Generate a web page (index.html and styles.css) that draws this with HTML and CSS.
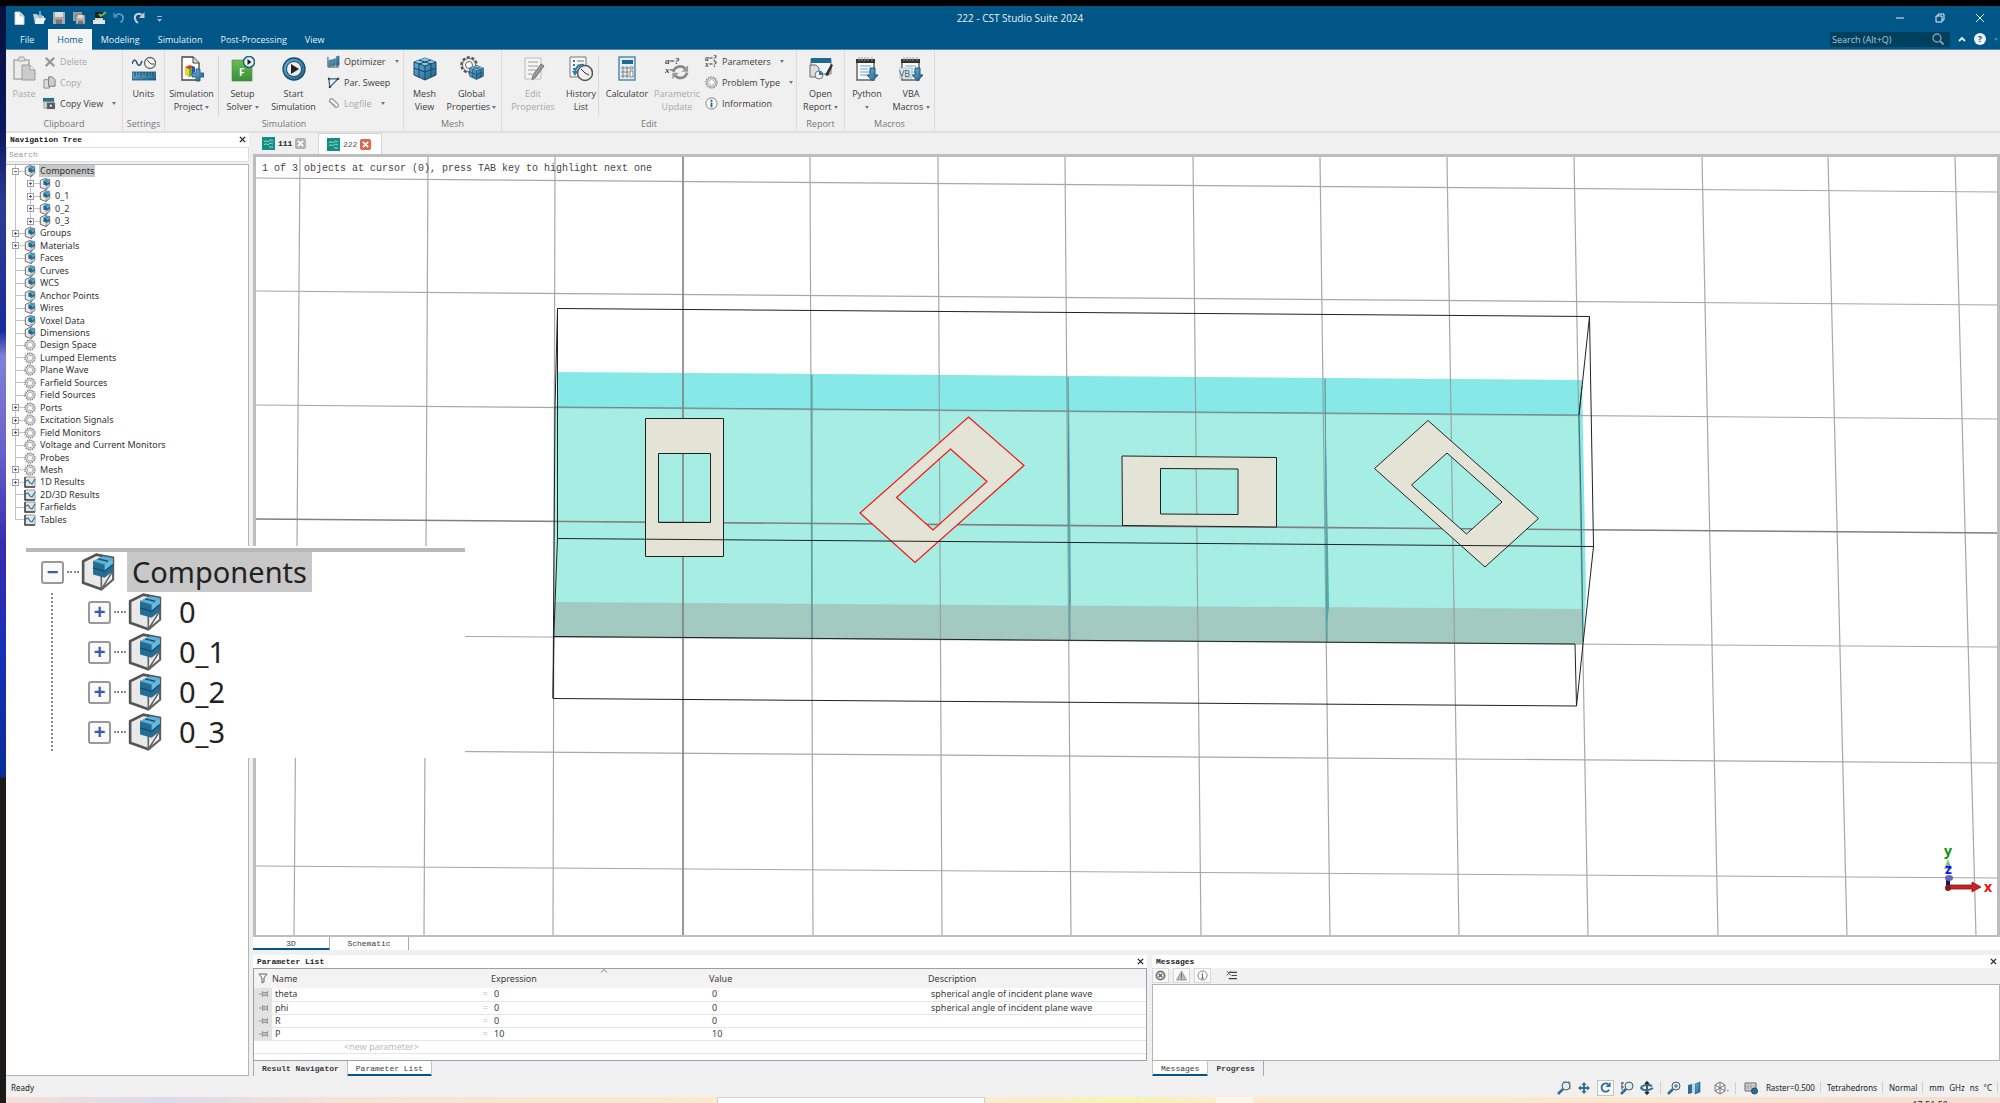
FILE: index.html
```html
<!DOCTYPE html>
<html lang="en">
<head>
    <meta charset="UTF-8">
    <meta name="viewport" content="width=device-width, initial-scale=1.0">
    <title>222 - CST Studio Suite 2024</title>
    <link rel="stylesheet" href="styles.css">
</head>
<body>
    <!-- Shared icons -->
    <svg class="defs" width="0" height="0" aria-hidden="true">
        <linearGradient id="blue" x1="0" y1="0" x2="1" y2="1">
            <stop offset="0" stop-color="#6db6dc"/><stop offset="1" stop-color="#1d5f88"/>
        </linearGradient>
        <linearGradient id="green" x1="0" y1="0" x2="0" y2="1">
            <stop offset="0" stop-color="#6cba55"/><stop offset="1" stop-color="#38903a"/>
        </linearGradient>
        <symbol id="cube" viewBox="0 0 20 23">
            <path d="M1 5 9 1l10 2v13l-7 6L1 18z" fill="#e9e9e9" stroke="#555" stroke-width="1.6"/>
            <path d="M12 13v9M12 22l7-6v-5z" fill="#fff" stroke="#666"/>
            <path d="M7 5l6-3 6 1v8l-5 4-7-2z" fill="#256d93"/>
            <path d="M7 5l6-3 6 1-5 4z" fill="#5db0d8"/>
            <path d="M14 7l5-4v4l-5 4z" fill="#69b9dd"/>
            <path d="M7 9l7 2 5-4M10 3.500l6 1.500" fill="none" stroke="#154f70" stroke-width=".8"/>
        </symbol>
        <symbol id="gear" viewBox="0 0 12 12">
            <circle cx="6" cy="6" r="5.200" fill="none" stroke="#8a8a8a" stroke-width="1.200" stroke-dasharray="1.200 1.100"/>
            <circle cx="6" cy="6" r="4.300" fill="#f4f4f4" stroke="#8a8a8a" stroke-width=".9"/>
            <circle cx="6" cy="6" r="2.700" fill="#fff" stroke="#999" stroke-width=".7"/>
        </symbol>
        <symbol id="chart" viewBox="0 0 12 12">
            <path d="M1 1v10h10V1z" fill="#e4e4e4" stroke="#999"/>
            <path d="M1 1v10h10" fill="none" stroke="#444" stroke-width="1.500"/>
            <path d="M2 5l2-1 2 3 2 1 3-5" fill="none" stroke="#2c7ca6" stroke-width="1.300"/>
        </symbol>
        <symbol id="pin" viewBox="0 0 9 6">
            <path d="M0 3h3M3.500 0v6M8.500 0v6M4 1.500h4M4 3h4M4 4.500h4" stroke="#888" stroke-width=".8" fill="none"/>
        </symbol>
        <symbol id="wave" viewBox="0 0 13 13">
            <path d="M0 0h13v13H0z" fill="#0f8f86"/>
            <path d="M2 5c2-3 3 1 5-1s3 0 4 0M2 8c2-3 3 1 5-1s3 0 4 0M7 10c2-1 2 1 4 0" fill="none" stroke="#d5f3ef" stroke-width=".8"/>
        </symbol>
        <symbol id="grid-cube" viewBox="0 0 24 24">
            <path d="M1 5 12 1l11 4v13l-11 5L1 18z" fill="url(#blue)" stroke="#16486a"/>
            <path d="M1 5l11 4 11-4L12 1z" fill="#8cc8e6"/>
            <path d="M1 5l11 4 11-4M12 9v14M1 11l11 4 11-4M6 7v13M18 7v13M6 3l12 4M18 3L6 7" fill="none" stroke="#16486a"/>
        </symbol>
        <symbol id="notepad" viewBox="0 0 24 26">
            <path d="M2 4h17v20H2z" fill="#fafafa" stroke="#666" stroke-width="1.500"/>
            <path d="M1 3h19v4H1z" fill="#333"/>
            <path d="M4 1v4M7 1v4M10 1v4M13 1v4M17 1v4" stroke="#999"/>
            <path d="M5 10h11M5 13h8M5 16h10M5 19h7" stroke="#93c5df" stroke-width="1.500"/>
            <path d="M15 12h5v7h3l-5.500 6-5.500-6h3z" fill="url(#blue)" stroke="#1c5376"/>
        </symbol>
        <symbol id="lens" viewBox="0 0 14 14">
            <path d="M1 13l5-5" stroke="#2d6f96" stroke-width="2.500"/>
            <circle cx="9" cy="5" r="4" fill="#d9edf7" stroke="#555"/>
        </symbol>
        <symbol id="turn" viewBox="0 0 12 12">
            <path d="M10 8.500A4.500 4.500 0 1 1 9 2.500" fill="none" stroke="currentColor" stroke-width="2"/>
            <path d="M11.500 0v5.500H6z" fill="currentColor"/>
        </symbol>
    </svg>

    <div class="desktop">
        <div class="wallpaper"></div>
        <div class="window">
            <header class="titlebar">
                <div class="quick-access">
                    <button class="qa" aria-label="New"><svg viewBox="0 0 14 14"><path d="M3 1h5l4 4v8.500H3z" fill="#fff" stroke="#ccc"/><path d="M8 1v4h4" fill="#ddd" stroke="#999" stroke-width=".6"/></svg></button>
                    <button class="qa" aria-label="Open"><svg viewBox="0 0 14 14"><path d="M1 3h4l1 2h6v8H3z" fill="#c9c9c9"/><path d="M4 7h10l-3 6H3z" fill="#f2f2f2"/><path d="M8 0v6M6 4l2 3 2-3" stroke="#7cc4e8" stroke-width="1.500" fill="none"/></svg></button>
                    <button class="qa" aria-label="Save"><svg viewBox="0 0 14 14"><path d="M1 1h12v12H1z" fill="#a9a9a9"/><path d="M3 1h8v5H3z" fill="#ddd"/><path d="M4 8.500h6V13H4z" fill="#777"/></svg></button>
                    <button class="qa" aria-label="Save all"><svg viewBox="0 0 14 14"><path d="M1 1h9v9H1z" fill="#999"/><path d="M4 4h9v9H4z" fill="#b5b5b5" stroke="#666" stroke-width=".6"/><path d="M6 4h5v3H6z" fill="#ddd"/><path d="M6 9.500h5V13H6z" fill="#777"/></svg></button>
                    <button class="qa" aria-label="Archive"><svg viewBox="0 0 14 14"><path d="M3 1h8v6H3z" fill="#222"/><path d="M1 9h12v4H1z" fill="#e4e4e4"/><path d="M3 8h8" stroke="#fff" stroke-width="1.500"/><path d="M7 3l2 2 5-4" stroke="#65c046" stroke-width="2" fill="none"/></svg></button>
                    <button class="qa undo" aria-label="Undo"><svg viewBox="0 0 14 14"><path d="M3 5c4-4 9-1 8 3-.5 2-1.500 3-2.500 3.500" fill="none" stroke="currentColor" stroke-width="1.500"/><path d="M2 2v4h4" fill="none" stroke="currentColor" stroke-width="1.200"/></svg></button>
                    <button class="qa redo" aria-label="Redo"><svg viewBox="0 0 14 14"><path d="M10 4C6 1 2 4 3 8c.5 2 1.500 3 3 4" fill="none" stroke="currentColor" stroke-width="2"/><path d="M12.500 1v6H7z" fill="currentColor"/></svg></button>
                    <button class="qa more" aria-label="Customize"><svg viewBox="0 0 14 14"><path d="M5 5.500h5" stroke="currentColor"/><path d="M5 8h5l-2.500 3z" fill="currentColor"/></svg></button>
                </div>
                <div class="window-title">222 - CST Studio Suite 2024</div>
                <div class="window-buttons">
                    <button aria-label="Minimize"><svg viewBox="0 0 10 10"><path d="M1 5h8" stroke="#e8f1f7"/></svg></button>
                    <button aria-label="Restore"><svg viewBox="0 0 10 10"><path d="M1 3h6v6H1zM3 3V1h6v6H7" fill="none" stroke="#e8f1f7"/></svg></button>
                    <button aria-label="Close"><svg viewBox="0 0 10 10"><path d="M1 1l8 8M9 1L1 9" stroke="#e8f1f7"/></svg></button>
                </div>
            </header>

            <nav class="menubar">
                <a href="#" class="menu-tab file">File</a>
                <a href="#" class="menu-tab active">Home</a>
                <a href="#" class="menu-tab">Modeling</a>
                <a href="#" class="menu-tab">Simulation</a>
                <a href="#" class="menu-tab">Post-Processing</a>
                <a href="#" class="menu-tab">View</a>
                <div class="menu-right">
                    <label class="quick-search">
                        <input type="text" placeholder="Search (Alt+Q)" aria-label="Search">
                        <svg viewBox="0 0 12 12"><circle cx="5" cy="5" r="4" fill="none" stroke="#8d9ba5" stroke-width="1.300"/><path d="M8 8l3.500 3.500" stroke="#8d9ba5" stroke-width="2"/></svg>
                    </label>
                    <button class="collapse" aria-label="Collapse ribbon"><svg viewBox="0 0 8 6"><path d="M1 5l3-3 3 3" fill="none" stroke="#e6eef3" stroke-width="1.800"/></svg></button>
                    <button class="help" aria-label="Help">?</button>
                    <i class="arrow dim"></i>
                </div>
            </nav>

            <section class="ribbon">
                <div class="group g-clipboard">
                    <div class="group-body">
                        <button class="big w-paste" disabled>
                            <svg viewBox="0 0 24 26"><path d="M2 4h15v19H2z" fill="#ececec" stroke="#aaa" stroke-width="1.500"/><path d="M6 5l1-4h5l1 4z" fill="#ddd" stroke="#aaa"/><path d="M10 9h8l5 5v10H10z" fill="#ccc" stroke="#999"/><path d="M18 9v5h5" fill="#eee" stroke="#999"/></svg>
                            <span>Paste</span>
                        </button>
                        <div class="stack">
                            <button class="small" disabled><svg viewBox="0 0 14 14"><path d="M3 3l9 9M12 3l-9 9" stroke="#999" stroke-width="2.500"/></svg>Delete</button>
                            <button class="small" disabled><svg viewBox="0 0 14 14"><path d="M1 4h6v9H1z" fill="#ddd" stroke="#888"/><path d="M6 1h4l3 3v7H6z" fill="#ccc" stroke="#777"/></svg>Copy</button>
                            <button class="small"><svg viewBox="0 0 14 14"><path d="M0 1h12v4H0z" fill="#2a6f96"/><path d="M1 5h10v7H1z" fill="#ddd" stroke="#666" stroke-width=".6"/><path d="M4 6h9v7H4z" fill="#666"/><circle cx="8.500" cy="9.500" r="2.200" fill="#ccc" stroke="#333"/></svg>Copy View<i class="arrow"></i></button>
                        </div>
                    </div>
                    <div class="group-name">Clipboard</div>
                </div>
                <div class="group g-settings">
                    <div class="group-body">
                        <button class="big w-units">
                            <svg viewBox="0 0 24 26"><path d="M0 8c2-6 4-4 5-1s3 4 5-2" fill="none" stroke="#1d4f70" stroke-width="1.500"/><circle cx="18" cy="7" r="5.500" fill="#f4f4f4" stroke="#666" stroke-width="1.300"/><path d="M15 4l4 4h3" fill="none" stroke="#444"/><path d="M0 16h24v8H0z" fill="url(#blue)" stroke="#1c5376" stroke-width=".8"/><path d="M3 16v4M6 16v3M9 16v4M12 16v3M15 16v4M18 16v3M21 16v4" stroke="#123c55"/></svg>
                            <span>Units</span>
                        </button>
                    </div>
                    <div class="group-name">Settings</div>
                </div>
                <div class="group g-simulation">
                    <div class="group-body">
                        <button class="big w-project">
                            <svg viewBox="0 0 24 26"><path d="M2 1h11l6 6v17H2z" fill="#fff" stroke="#444" stroke-width="1.300"/><path d="M13 1v6h6" fill="#ddd" stroke="#444"/><path d="M5 11l5-2 4 2v7l-5 3-4-3z" fill="#e33a22"/><path d="M5 11l4 2v8l-4-3z" fill="#f4d421"/><path d="M9 13l3-1v7l-3 2z" fill="#54b848"/><path d="M12 10l3 1v5l-3 1z" fill="#2c4fc4"/><path d="M16 13h4v4h4v4h-4v4h-4v-4h-4v-4h4z" fill="url(#blue)" stroke="#1c5376" stroke-width=".8"/></svg>
                            <span>Simulation<br>Project <i class="arrow"></i></span>
                        </button>
                        <div class="divider"></div>
                        <button class="big w-setup">
                            <svg viewBox="0 0 24 26"><path d="M1 4h20v21H1z" fill="url(#green)" stroke="#3f8f3d" stroke-width=".6"/><text x="8" y="20" class="solver-letter">F</text><circle cx="18" cy="6" r="5.500" fill="#e9f2f7" stroke="#25627f" stroke-width="1.500"/><path d="M16.500 3v6l4-3z" fill="#222"/></svg>
                            <span>Setup<br>Solver <i class="arrow"></i></span>
                        </button>
                        <button class="big w-start">
                            <svg viewBox="0 0 24 26"><circle cx="12" cy="13" r="11" fill="url(#blue)" stroke="#17496a" stroke-width="1.300"/><circle cx="12" cy="13" r="7.500" fill="#eee" stroke="#17496a"/><path d="M9 8v10l8-5z" fill="#222"/></svg>
                            <span>Start<br>Simulation</span>
                        </button>
                        <div class="stack">
                            <button class="small"><svg viewBox="0 0 14 14"><path d="M1 2v11h12" fill="none" stroke="#444"/><path d="M2 6l3-1v7H2zM6 5l3-1v7l-3 1zM10 2l3-1v10l-3 1z" fill="url(#blue)" stroke="#1c5376" stroke-width=".6"/></svg>Optimizer<i class="arrow"></i></button>
                            <button class="small"><svg viewBox="0 0 14 14"><path d="M2 3h10L3 12z" fill="none" stroke="#2c6485" stroke-width="1.300"/><path d="M1 2h2v2H1zM11 2h2v2h-2zM2 11h2v2H2z" fill="#333"/></svg>Par. Sweep</button>
                            <button class="small" disabled><svg viewBox="0 0 14 14"><path d="M2 4l7 7c2 1 4-1 3-3L6 2C4 1 2 3 3 5l6 5" fill="none" stroke="#999" stroke-width="1.300"/></svg>Logfile<i class="arrow"></i></button>
                        </div>
                    </div>
                    <div class="group-name">Simulation</div>
                </div>
                <div class="group g-mesh">
                    <div class="group-body">
                        <button class="big w-mesh">
                            <svg viewBox="0 0 24 26"><use href="#grid-cube" width="24" height="26"/></svg>
                            <span>Mesh<br>View</span>
                        </button>
                        <button class="big w-global">
                            <svg viewBox="0 0 24 26"><circle cx="9" cy="9" r="7.500" fill="none" stroke="#555" stroke-width="2.500" stroke-dasharray="3 1.700"/><circle cx="9" cy="9" r="6.500" fill="#f4f4f4" stroke="#666"/><circle cx="9" cy="9" r="3.500" fill="#fff" stroke="#666"/><use href="#grid-cube" x="9" y="8" width="15" height="17"/></svg>
                            <span>Global<br>Properties <i class="arrow"></i></span>
                        </button>
                    </div>
                    <div class="group-name">Mesh</div>
                </div>
                <div class="group g-edit">
                    <div class="group-body">
                        <button class="big w-props" disabled>
                            <svg viewBox="0 0 24 26"><path d="M4 2h16v21H4z" fill="#f4f4f4" stroke="#bbb"/><path d="M7 6h10M7 10h10M7 14h8M7 18h4" stroke="#bbb" stroke-width="1.500"/><path d="M11 24l1-5 8-11 3 2-8 11z" fill="#999" stroke="#777"/></svg>
                            <span>Edit<br>Properties</span>
                        </button>
                        <button class="big w-history">
                            <svg viewBox="0 0 24 26"><path d="M1 1h16v20H1z" fill="#f6f6f6" stroke="#777"/><path d="M4 5h2M4 9h2M4 13h2" stroke="#2c7ca6" stroke-width="2"/><path d="M8 5h7M8 9h4" stroke="#777"/><circle cx="16" cy="17" r="7.500" fill="#eee" stroke="#555" stroke-width="1.500"/><path d="M12 13l4 4 4 2" fill="none" stroke="#333"/><path d="M6 17c0-6 5-9 9-8" fill="none" stroke="#2c7ca6" stroke-width="2"/><path d="M3 15h6l-3 5z" fill="#2c7ca6"/></svg>
                            <span>History<br>List</span>
                        </button>
                        <div class="divider"></div>
                        <button class="big w-calc">
                            <svg viewBox="0 0 24 26"><path d="M4 1h16v23H4z" fill="#e7eef2" stroke="#4d8cac" stroke-width="1.500"/><path d="M7 4h11v4H7z" fill="#1f6a94"/><path d="M7 11h2v2H7zM11 11h2v2h-2zM15 11h3v2h-3zM7 15h2v2H7zM11 15h2v2h-2zM7 19h2v2H7zM11 19h2v2h-2zM15 15h3v6h-3z" fill="#fff" stroke="#666" stroke-width=".8"/></svg>
                            <span>Calculator</span>
                        </button>
                        <button class="big w-update" disabled>
                            <svg viewBox="0 0 26 26"><text x="0" y="8" class="glyph">a=?</text><text x="0" y="17" class="glyph">x=</text><path d="M9 16c2-7 10-7 13-3M24 17c-2 7-10 7-13 3" fill="none" stroke="#888" stroke-width="3"/><path d="M25 9v7h-7zM8 24v-7h7z" fill="#999"/></svg>
                            <span>Parametric<br>Update</span>
                        </button>
                        <div class="stack">
                            <button class="small"><svg viewBox="0 0 14 14"><text x="0" y="6" class="glyph small-glyph">a=?</text><text x="0" y="13" class="glyph small-glyph">x=?</text></svg>Parameters<i class="arrow"></i></button>
                            <button class="small"><svg viewBox="0 0 12 12"><use href="#gear"/></svg>Problem Type<i class="arrow"></i></button>
                            <button class="small"><svg viewBox="0 0 14 14"><circle cx="7" cy="7" r="6" fill="#fff" stroke="#777"/><path d="M7 3v2M7 6v5" stroke="#1f6a94" stroke-width="2"/></svg>Information</button>
                        </div>
                    </div>
                    <div class="group-name">Edit</div>
                </div>
                <div class="group g-report">
                    <div class="group-body">
                        <button class="big w-report">
                            <svg viewBox="0 0 24 26"><path d="M2 3h20v15H2z" fill="#f4f4f4" stroke="#777"/><path d="M2 2h20v5H2z" fill="#1f6a94"/><path d="M1 9h6l3 3v9H1z" fill="#ddd" stroke="#666"/><circle cx="10" cy="19" r="4" fill="#eee" stroke="#777"/><path d="M10 15a4 4 0 0 1 4 4h-4z" fill="#2c7ca6"/><path d="M16 19l6-11 2 1-5 11z" fill="#333"/></svg>
                            <span>Open<br>Report <i class="arrow"></i></span>
                        </button>
                    </div>
                    <div class="group-name">Report</div>
                </div>
                <div class="group g-macros">
                    <div class="group-body">
                        <button class="big w-macro">
                            <svg viewBox="0 0 24 26"><use href="#notepad"/></svg>
                            <span>Python<br><i class="arrow"></i></span>
                        </button>
                        <button class="big w-macro">
                            <svg viewBox="0 0 24 26"><use href="#notepad" x="1"/><path d="M0 12h13v10H0z" fill="#dfe6ea" stroke="#aaa" stroke-width=".6"/><text x="0" y="21" class="vb">VB</text></svg>
                            <span>VBA<br>Macros <i class="arrow"></i></span>
                        </button>
                    </div>
                    <div class="group-name">Macros</div>
                </div>
            </section>

            <div class="main">
                <aside class="nav-panel">
                    <div class="panel-title">Navigation Tree<button class="close" aria-label="Close navigation tree"><svg viewBox="0 0 8 8"><path d="M1 1l6 6M7 1L1 7" stroke="#222" stroke-width="1.500"/></svg></button></div>
                    <input class="tree-search" type="text" placeholder="Search" aria-label="Search tree">
                    <div class="tree-box">
                        <ul class="tree">
                            <li><button class="exp open" aria-label="Collapse"></button><svg><use href="#cube"/></svg><span class="selected">Components</span></li>
                            <li class="child"><button class="exp" aria-label="Expand"></button><svg><use href="#cube"/></svg><span>0</span></li>
                            <li class="child"><button class="exp" aria-label="Expand"></button><svg><use href="#cube"/></svg><span>0_1</span></li>
                            <li class="child"><button class="exp" aria-label="Expand"></button><svg><use href="#cube"/></svg><span>0_2</span></li>
                            <li class="child"><button class="exp" aria-label="Expand"></button><svg><use href="#cube"/></svg><span>0_3</span></li>
                            <li><button class="exp" aria-label="Expand"></button><svg><use href="#cube"/></svg><span>Groups</span></li>
                            <li><button class="exp" aria-label="Expand"></button><svg><use href="#cube"/></svg><span>Materials</span></li>
                            <li><i></i><svg><use href="#cube"/></svg><span>Faces</span></li>
                            <li><i></i><svg><use href="#cube"/></svg><span>Curves</span></li>
                            <li><i></i><svg><use href="#cube"/></svg><span>WCS</span></li>
                            <li><i></i><svg><use href="#cube"/></svg><span>Anchor Points</span></li>
                            <li><i></i><svg><use href="#cube"/></svg><span>Wires</span></li>
                            <li><i></i><svg><use href="#cube"/></svg><span>Voxel Data</span></li>
                            <li><i></i><svg><use href="#cube"/></svg><span>Dimensions</span></li>
                            <li><i></i><svg><use href="#gear"/></svg><span>Design Space</span></li>
                            <li><i></i><svg><use href="#gear"/></svg><span>Lumped Elements</span></li>
                            <li><i></i><svg><use href="#gear"/></svg><span>Plane Wave</span></li>
                            <li><i></i><svg><use href="#gear"/></svg><span>Farfield Sources</span></li>
                            <li><i></i><svg><use href="#gear"/></svg><span>Field Sources</span></li>
                            <li><button class="exp" aria-label="Expand"></button><svg><use href="#gear"/></svg><span>Ports</span></li>
                            <li><button class="exp" aria-label="Expand"></button><svg><use href="#gear"/></svg><span>Excitation Signals</span></li>
                            <li><button class="exp" aria-label="Expand"></button><svg><use href="#gear"/></svg><span>Field Monitors</span></li>
                            <li><i></i><svg><use href="#gear"/></svg><span>Voltage and Current Monitors</span></li>
                            <li><i></i><svg><use href="#gear"/></svg><span>Probes</span></li>
                            <li><button class="exp" aria-label="Expand"></button><svg><use href="#gear"/></svg><span>Mesh</span></li>
                            <li><button class="exp" aria-label="Expand"></button><svg><use href="#chart"/></svg><span>1D Results</span></li>
                            <li><i></i><svg><use href="#chart"/></svg><span>2D/3D Results</span></li>
                            <li><i></i><svg><use href="#chart"/></svg><span>Farfields</span></li>
                            <li><i></i><svg><use href="#chart"/></svg><span>Tables</span></li>
                        </ul>
                    </div>
                </aside>

                <div class="workspace">
                    <div class="doc-tabs">
                        <div class="doc-tab"><svg class="doc-icon"><use href="#wave"/></svg><a href="#">111</a><button class="tab-close" aria-label="Close 111"><svg viewBox="0 0 8 8"><path d="M1 1l6 6M7 1L1 7" stroke="#fff" stroke-width="2"/></svg></button></div>
                        <div class="doc-tab active"><svg class="doc-icon"><use href="#wave"/></svg><a href="#">222</a><button class="tab-close" aria-label="Close 222"><svg viewBox="0 0 8 8"><path d="M1 1l6 6M7 1L1 7" stroke="#fff" stroke-width="2"/></svg></button></div>
                    </div>

                    <div class="viewport">
                        <div class="hint">1 of 3 objects at cursor (0), press TAB key to highlight next one</div>
                        <svg class="scene" viewBox="256 156 1741 779" preserveAspectRatio="xMinYMin slice">
                            <!-- substrate -->
                            <path d="M557 371L1582 379L1586 590L1583 643L554 636z" fill="#87e9e7"/>
                            <path d="M555 406L1579 414L1583 610L555 603z" fill="#a6eee4"/>
                            <path d="M555 601L1583 608L1583 643L554 636z" fill="#a3cac0"/>

                            <!-- working plane grid -->
                            <g stroke="#999" stroke-width="1.200" opacity=".85">
                                <path d="M300 156L294 935M428 156L424 935M555 156L553 935M810 156L813 935M938 156L942 935M1065 156L1071 935M1193 156L1201 935M1320 156L1330 935M1447 156L1459 935M1574 156L1588 935M1702 156L1718 935M1828 156L1847 935M1955 156L1976 935"/>
                                <path d="M256 177L1997 191M256 290L1997 304M256 404L1997 418M256 634L1997 646M256 749L1997 762M256 865L1997 877"/>
                            </g>
                            <path d="M683 156V935M256 518L1997 532" stroke="#808080" stroke-width="1.600"/>

                            <!-- cell seams -->
                            <g fill="none" stroke="#3f8f8f">
                                <path d="M812 374L812 637M1068 376L1069 540L1070 640M1325 378L1327 641"/>
                                <path d="M555 406L1579 414" stroke="#668c8c"/>
                            </g>
                            <path d="M1069 390L1071 600L1069 630zM1325 380L1329 605L1326 635z" fill="#4fa9a9"/>
                            <path d="M1582 385L1579 414L1581 500L1583 640" fill="none" stroke="#2e7474"/>

                            <!-- patches with slots -->
                            <g fill="#e3e4d6" fill-rule="evenodd" stroke="#222">
                                <path d="M645.500 417.500h78v138h-78zM658.500 452.500h52v69h-52z"/>
                                <path stroke="#ff1010" stroke-width="1.200" d="M968.500 416L1024 464.500L915 561.500L860 512zM950.500 448L987 480.500L933 529L896.500 496.500z"/>
                                <path d="M1122 455L1276.500 456.500V526L1122.500 524.500zM1160.500 467.500L1238 468V513.500L1160.500 513z"/>
                                <path d="M1428 419.500L1538.500 517.500L1485 566L1374.500 467.500zM1447 452L1502 501L1466.500 533L1411.500 484z"/>
                            </g>

                            <!-- bounding box -->
                            <g fill="none" stroke="#222">
                                <path d="M557.500 307.500L1589.500 315.500L1593.500 545.500L1583 643L1576.500 705L553 697.500L554 630L557.500 537.500z"/>
                                <path d="M557.500 537.500L1593.500 545.500M1589.500 315.500L1579 414M1575 643L1576.500 705"/>
                                <path d="M557.500 307.500L555 406L553 697"/>
                                <path d="M554 635.500L1575 643"/>
                            </g>

                            <!-- axes -->
                            <path d="M1944 868l4-10 4 10z" fill="#7cc47c"/>
                            <path d="M1946 888V878h4v10z" fill="#151560"/>
                            <ellipse cx="1949" cy="877" rx="4" ry="3" fill="#6666bb"/>
                            <path d="M1947 884h25v-3l9 5-9 5v-3h-25z" fill="#cc2222" stroke="#801515" stroke-width=".8"/>
                            <circle cx="1948" cy="887" r="3" fill="#8a1a1a"/>
                            <text class="axis" x="1944" y="855" fill="#0a980a">y</text>
                            <text class="axis" x="1945" y="873" fill="#1010f0">z</text>
                            <text class="axis" x="1984" y="891" fill="#f01010">x</text>
                        </svg>
                    </div>

                    <div class="view-tabs">
                        <a href="#" class="active">3D</a>
                        <a href="#" class="schematic">Schematic</a>
                    </div>

                    <div class="docks">
                        <section class="dock">
                            <div class="panel-title">Parameter List<button class="close" aria-label="Close parameter list"><svg viewBox="0 0 8 8"><path d="M1 1l6 6M7 1L1 7" stroke="#222" stroke-width="1.500"/></svg></button></div>
                            <div class="param-box">
                                <table>
                                    <colgroup><col class="c-pin"><col class="c-name"><col class="c-expr"><col class="c-value"><col></colgroup>
                                    <thead>
                                        <tr>
                                            <th><svg class="funnel" viewBox="0 0 10 11"><path d="M1 1h8L6 5v4l-2 1V5z" fill="none" stroke="#666"/></svg></th>
                                            <th>Name</th>
                                            <th>Expression<svg class="sort" viewBox="0 0 8 4"><path d="M1 3.500l3-3 3 3" fill="none" stroke="#777"/></svg></th>
                                            <th>Value</th>
                                            <th>Description</th>
                                        </tr>
                                    </thead>
                                    <tbody>
                                        <tr><td><svg class="pin"><use href="#pin"/></svg></td><td>theta<i>=</i></td><td>0</td><td>0</td><td>spherical angle of incident plane wave</td></tr>
                                        <tr><td><svg class="pin"><use href="#pin"/></svg></td><td>phi<i>=</i></td><td>0</td><td>0</td><td>spherical angle of incident plane wave</td></tr>
                                        <tr><td><svg class="pin"><use href="#pin"/></svg></td><td>R<i>=</i></td><td>0</td><td>0</td><td></td></tr>
                                        <tr><td><svg class="pin"><use href="#pin"/></svg></td><td>P<i>=</i></td><td>10</td><td>10</td><td></td></tr>
                                        <tr class="new-row"><td></td><td><input type="text" placeholder="&lt;new parameter&gt;" aria-label="New parameter"></td><td></td><td></td><td></td></tr>
                                    </tbody>
                                </table>
                            </div>
                            <div class="dock-tabs">
                                <a href="#" class="first">Result Navigator</a>
                                <a href="#" class="active">Parameter List</a>
                            </div>
                        </section>

                        <section class="dock">
                            <div class="panel-title">Messages<button class="close" aria-label="Close messages"><svg viewBox="0 0 8 8"><path d="M1 1l6 6M7 1L1 7" stroke="#222" stroke-width="1.500"/></svg></button></div>
                            <div class="msg-tools">
                                <button aria-label="Errors"><svg viewBox="0 0 12 12"><circle cx="6" cy="6" r="5.500" fill="#777"/><circle cx="6" cy="6" r="3.500" fill="#eee"/><path d="M4 4l4 4M8 4L4 8" stroke="#666" stroke-width="1.500"/></svg></button>
                                <button aria-label="Warnings"><svg viewBox="0 0 12 12"><path d="M6 1l5.500 10H.5z" fill="#bbb" stroke="#999"/><path d="M6 4v4M6 9v1" stroke="#555"/></svg></button>
                                <button aria-label="Infos"><svg viewBox="0 0 12 12"><circle cx="6" cy="6" r="5" fill="#fff" stroke="#777"/><path d="M6 3v1M5 5h1v4M4.500 9h3" stroke="#555" fill="none"/></svg></button>
                                <button class="flat" aria-label="Clear"><svg viewBox="0 0 12 12"><path d="M4 2.500h8M6 6h6M3 9.500h9" stroke="#444" stroke-width="1.300"/><path d="M1 1l4 5M5 1L1 6" stroke="#555"/></svg></button>
                            </div>
                            <div class="msg-box"></div>
                            <div class="dock-tabs">
                                <a href="#" class="active">Messages</a>
                                <a href="#" class="last">Progress</a>
                            </div>
                        </section>
                    </div>
                </div>
            </div>

            <footer class="statusbar">
                <span class="ready">Ready</span>
                <button aria-label="Zoom window"><svg viewBox="0 0 14 14"><path d="M6 1h7v8" fill="none" stroke="#555" stroke-dasharray="1.500 1"/><use href="#lens" width="14" height="14"/></svg></button>
                <button aria-label="Pan"><svg viewBox="0 0 14 14"><path d="M7 1l2.500 3H8v2h2V4.500L13 7l-3 2.500V8H8v2h1.500L7 13l-2.500-3H6V8H4v1.500L1 7l3-2.500V6h2V4H4.500z" fill="#2a6e96"/></svg></button>
                <button class="pressed" aria-label="Rotate"><svg class="blue" viewBox="0 0 12 12"><use href="#turn"/></svg></button>
                <button aria-label="Dynamic zoom"><svg viewBox="0 0 14 14"><path d="M2 1v8M1 2h3M1 6h3" stroke="#555"/><use href="#lens" width="14" height="14"/></svg></button>
                <button aria-label="Rotate in plane"><svg viewBox="0 0 14 14"><path d="M7 1v12M5 3l2-2 2 2M5 11l2 2 2-2" stroke="#222" stroke-width="1.500" fill="none"/><path d="M12 5C8 3 2 4 1 7c2 3 8 3 12 0" fill="none" stroke="#2a6e96" stroke-width="2"/></svg></button>
                <i class="sep"></i>
                <button aria-label="Reset view"><svg viewBox="0 0 14 14"><use href="#lens" width="14" height="14"/><path d="M7 5h4M9 3v4" stroke="#2a6e96"/></svg></button>
                <button aria-label="Cutting plane"><svg viewBox="0 0 14 14"><path d="M1 4l4-1v9l-4 1z" fill="#2a6e96"/><path d="M8 3l5-2v10l-5 2z" fill="url(#blue)" stroke="#1c5376" stroke-width=".6"/><path d="M5 3l3-1v9l-3 1z" fill="#bcdbea"/></svg></button>
                <button class="wide" aria-label="Wireframe"><svg viewBox="0 0 14 14"><path d="M2 4l5-3 5 3v6l-5 3-5-3zM2 4l5 3 5-3M7 7v6M2 10l5-3 5 3M7 1v6" fill="none" stroke="#777"/></svg>.</button>
                <i class="sep"></i>
                <button class="raster" aria-label="Raster settings"><svg viewBox="0 0 14 14"><path d="M1 2h11v8H1z" fill="#ddd" stroke="#666"/><path d="M1 5h11M1 7h11M4 2v8M7 2v8" stroke="#888" stroke-width=".6"/><circle cx="10.500" cy="10" r="3" fill="#2a6e96" stroke="#174a68"/></svg></button>
                <span class="cell">Raster=0.500</span>
                <span class="cell">Tetrahedrons</span>
                <span class="cell">Normal</span>
                <span class="cell units"><b>mm</b><b>GHz</b><b>ns</b><b>°C</b></span>
            </footer>

            <div class="taskbar"><div class="task-search"></div><div class="task-app"></div><time>17:51:50</time></div>
        </div>
    </div>

    <!-- Enlarged part of the tree -->
    <div class="magnifier">
        <ul>
            <li class="root"><i class="box">−</i><i class="dots"></i><svg><use href="#cube"/></svg><span class="selected">Components</span></li>
            <li><i class="box">+</i><i class="dots"></i><svg><use href="#cube"/></svg><span>0</span></li>
            <li><i class="box">+</i><i class="dots"></i><svg><use href="#cube"/></svg><span>0_1</span></li>
            <li><i class="box">+</i><i class="dots"></i><svg><use href="#cube"/></svg><span>0_2</span></li>
            <li><i class="box">+</i><i class="dots"></i><svg><use href="#cube"/></svg><span>0_3</span></li>
        </ul>
    </div>
</body>
</html>
```
FILE: styles.css
```css
* {
    box-sizing: border-box;
}

body {
    margin: 0;
    background: #000;
    font-family: "Open Sans", "Noto Sans", sans-serif;
    font-size: 9px;
    color: #3c3c3c;
    overflow: hidden;
}

ul {
    list-style: none;
    margin: 0;
    padding: 0;
}

button, input {
    font: inherit;
    color: inherit;
    border: none;
    background: none;
    padding: 0;
    margin: 0;
}

a {
    color: inherit;
    text-decoration: none;
}

i, b {
    font-style: normal;
    font-weight: normal;
}

svg {
    display: block;
    flex: none;
}

.defs {
    position: absolute;
}

.desktop {
    display: flex;
    height: 100vh;
    padding-top: 6px;
}

.wallpaper {
    width: 6px;
    background: linear-gradient(#08103c 0, #0b1660 120px, #2c3c94 200px, #1a2c9c 325px, #8080d8 350px, #6a62cc 440px, #3a2ab0 540px, #1530b8 650px, #0a2c98 771px, #1d1b17 772px);
}

.window {
    flex: 1;
    min-width: 0;
    display: flex;
    flex-direction: column;
    background: #f0f0f0;
}

/* Title bar */
.titlebar {
    display: grid;
    grid-template-columns: 1fr auto 1fr;
    align-items: center;
    height: 23px;
    background: #005686;
    color: #e8f1f7;
}

.quick-access {
    display: flex;
    gap: 6px;
    padding-left: 6px;
}

.qa svg {
    width: 14px;
    height: 14px;
}

.undo { color: #5fa3c9; }
.redo { color: #c4ccd1; }
.more { color: #9cb4c3; }

.window-title {
    font-size: 10px;
    padding-left: 34px;
}

.window-buttons {
    display: flex;
    justify-content: flex-end;
    gap: 30px;
    padding-right: 15px;
}

.window-buttons svg {
    width: 10px;
    height: 10px;
}

.menubar {
    display: flex;
    height: 21px;
    background: #005686;
    border-bottom: 1px solid #4b8cae;
    color: #e8f1f7;
}

.menu-tab {
    padding: 0 9px;
    line-height: 21px;
}

.menu-tab.file {
    padding: 0 14px;
}

.menu-tab.active {
    background: #f4f4f4;
    color: #005686;
    height: 21px;
}

.menu-right {
    margin-left: auto;
    display: flex;
    align-items: center;
    gap: 8px;
    padding-right: 2px;
}

.quick-search {
    display: flex;
    align-items: center;
    width: 120px;
    height: 15px;
    background: #00405f;
    padding: 0 6px 0 2px;
}

.quick-search input {
    flex: 1;
    min-width: 0;
}

.quick-search input::placeholder {
    color: #b3c7d3;
}

.quick-search svg {
    width: 12px;
    height: 12px;
}

.collapse svg {
    width: 8px;
    height: 6px;
}

.help {
    width: 12px;
    height: 12px;
    border-radius: 50%;
    background: #eef2f4;
    color: #005686;
    font-weight: bold;
    line-height: 12px;
}

.arrow {
    display: inline-block;
    border: 2px solid transparent;
    border-top: 3px solid #777;
    border-bottom: none;
    vertical-align: middle;
}

.arrow.dim {
    border-top-color: #5d7d90;
}

/* Ribbon */
.ribbon {
    display: flex;
    height: 83px;
    border-bottom: 2px solid #e0e0e0;
}

.group {
    display: flex;
    flex-direction: column;
    flex: none;
    border-right: 1px solid #dcdcdc;
}

.g-clipboard { width: 117px; }
.g-settings { width: 42px; }
.g-simulation { width: 239px; }
.g-mesh { width: 98px; }
.g-edit { width: 295px; }
.g-report { width: 48px; }
.g-macros { width: 90px; }

.group-body {
    flex: 1;
    display: flex;
    padding-top: 6px;
}

.group-name {
    text-align: center;
    color: #777;
    line-height: 14px;
}

.big {
    display: flex;
    flex-direction: column;
    align-items: center;
    gap: 5px;
    line-height: 13px;
    white-space: nowrap;
}

.big svg {
    width: 24px;
    height: 26px;
}

.big:disabled, .small:disabled {
    color: #a8a8a8;
}

.w-paste { width: 36px; }
.w-units { width: 41px; }
.w-project { width: 53px; }
.w-setup { width: 47px; }
.w-start { width: 55px; }
.w-mesh { width: 41px; }
.w-global { width: 53px; }
.w-props { width: 62px; }
.w-history { width: 34px; }
.w-calc { width: 56px; }
.w-update { width: 44px; }
.w-report { width: 47px; }
.w-macro { width: 44px; }

.divider {
    width: 1px;
    height: 60px;
    background: #d6d6d6;
}

.stack {
    display: grid;
    grid-template-rows: 21px 21px 21px;
    margin-top: -5px;
    padding-left: 6px;
}

.g-clipboard .stack {
    padding-left: 1px;
}

.small {
    display: flex;
    align-items: center;
    gap: 4px;
    white-space: nowrap;
}

.small svg {
    width: 13px;
    height: 13px;
}

.small .arrow {
    margin-left: 5px;
}

.solver-letter {
    font: bold 10px "Open Sans", sans-serif;
    fill: #fff;
}

.glyph {
    font: italic bold 10px "Liberation Serif", serif;
    fill: #444;
}

.small-glyph {
    font-size: 8px;
}

.vb {
    font: 9px "Open Sans", sans-serif;
    fill: #1f5a80;
}

/* Main area */
.main {
    flex: 1;
    min-height: 0;
    display: grid;
    grid-template-columns: 243px 1fr;
    grid-template-rows: minmax(0, 1fr);
    gap: 4px;
}

.panel-title {
    display: flex;
    justify-content: space-between;
    align-items: center;
    height: 13px;
    padding: 0 3px 0 4px;
    background: #fff;
    font: bold 8px "Liberation Mono", monospace;
    color: #222;
}

.close svg {
    width: 7px;
    height: 7px;
}

.nav-panel {
    display: flex;
    flex-direction: column;
    background: #f0f0f0;
}

.nav-panel .panel-title {
    height: 14px;
    padding-bottom: 2px;
}

.tree-search {
    height: 15px;
    padding: 0 2px;
    background: #fff;
    border: 1px solid #dcdcdc;
    font: 8px "Liberation Mono", monospace;
}

.tree-search::placeholder {
    color: #999;
}

.tree-box {
    flex: 1;
    margin-top: 2px;
    background: #fff;
    border: 1px solid #b4b4b4;
    border-left: none;
}

.tree {
    display: grid;
    grid-auto-rows: 1fr;
    height: 361px;
    font-family: "Noto Sans", sans-serif;
    color: #333;
}

.tree li {
    display: flex;
    align-items: center;
    padding-left: 6px;
    background:
        linear-gradient(#c4c4c4, #c4c4c4) 9px 0 / 1px 100% no-repeat,
        linear-gradient(#c4c4c4, #c4c4c4) 9px 50% / 12px 1px no-repeat;
}

.tree li.child {
    padding-left: 21px;
    background:
        linear-gradient(#c4c4c4, #c4c4c4) 9px 0 / 1px 100% no-repeat,
        linear-gradient(#c4c4c4, #c4c4c4) 24px 0 / 1px 100% no-repeat,
        linear-gradient(#c4c4c4, #c4c4c4) 24px 50% / 12px 1px no-repeat;
}

.tree li:last-child {
    background:
        linear-gradient(#c4c4c4, #c4c4c4) 9px 0 / 1px 50% no-repeat,
        linear-gradient(#c4c4c4, #c4c4c4) 9px 50% / 12px 1px no-repeat;
}

.tree i, .exp {
    width: 7px;
    height: 7px;
    flex: none;
}

.exp {
    border: 1px solid #a0a0a0;
    background:
        linear-gradient(#3b5bb0, #3b5bb0) center / 3px 1px no-repeat,
        linear-gradient(#3b5bb0, #3b5bb0) center / 1px 3px no-repeat,
        #fff;
}

.exp.open {
    background: linear-gradient(#3b5bb0, #3b5bb0) center / 3px 1px no-repeat, #fff;
}

.tree svg {
    width: 12px;
    height: 12px;
    margin: 0 3px 0 5px;
}

.tree span {
    padding: 0 1px;
    line-height: 12px;
}

.selected {
    background: #c8c8c8;
}

/* Workspace */
.workspace {
    display: flex;
    flex-direction: column;
    min-width: 0;
}

.doc-tabs {
    display: flex;
    height: 21px;
    padding-left: 1px;
}

.doc-tab {
    display: flex;
    align-items: center;
    gap: 3px;
    width: 64px;
    padding-left: 8px;
    font: bold 8px "Liberation Mono", monospace;
    color: #222;
}

.doc-tab.active {
    background: #fff;
    border: 1px solid #d4d4d4;
    border-bottom: none;
    font-weight: normal;
    color: #555;
}

.doc-icon {
    width: 13px;
    height: 13px;
}

.tab-close {
    width: 11px;
    height: 11px;
    padding: 2px;
    border-radius: 2px;
    background: #b4b4b4;
}

.active .tab-close {
    background: #e0674a;
}

.viewport {
    position: relative;
    flex: 1;
    min-height: 0;
    background: #fff;
    border: 3px solid #bdbdbd;
    border-bottom-width: 2px;
}

.scene {
    width: 100%;
    height: 100%;
}

.hint {
    position: absolute;
    left: 6px;
    top: 6px;
    font: 10px "Liberation Mono", monospace;
    color: #444;
}

.axis {
    font: bold 14px "Open Sans", sans-serif;
}

.view-tabs {
    display: flex;
    height: 13px;
    background: #fff;
    font: 8px/13px "Liberation Mono", monospace;
    text-align: center;
}

.view-tabs .active {
    width: 77px;
    border-right: 1px solid #aaa;
    border-bottom: 1px solid #005686;
    box-shadow: inset 0 -1px #005686;
}

.schematic {
    width: 79px;
    border-right: 1px solid #aaa;
}

.docks {
    display: grid;
    grid-template-columns: 894fr 848fr;
    gap: 5px;
    height: 126px;
    padding-top: 5px;
}

.dock {
    display: flex;
    flex-direction: column;
    min-width: 0;
}

.param-box {
    flex: 1;
    min-height: 0;
    background: #fff;
    border: 1px solid #9a9ea6;
}

table {
    width: 100%;
    table-layout: fixed;
    border-collapse: collapse;
    font-family: "Noto Sans", sans-serif;
}

.c-pin { width: 18px; }
.c-name { width: 219px; }
.c-expr { width: 218px; }
.c-value { width: 219px; }

th {
    position: relative;
    height: 19px;
    padding: 0;
    background: #f3f3f3;
    font-weight: normal;
    text-align: left;
}

.funnel {
    width: 10px;
    height: 11px;
    margin-left: 4px;
}

.sort {
    position: absolute;
    left: 50%;
    top: 0;
    width: 8px;
    height: 4px;
}

td {
    height: 13px;
    padding: 0 3px;
    line-height: 12px;
    border-bottom: 1px solid #e6e6e6;
}

td:first-child {
    background: #e2e2e2;
}

.new-row td:first-child {
    background: #fff;
}

td i {
    float: right;
    color: #bbb;
}

.pin {
    width: 9px;
    height: 6px;
    margin-left: 2px;
}

.new-row input {
    display: block;
    width: 100%;
    height: 12px;
    text-align: center;
}

.new-row input::placeholder {
    color: #bbb;
}

.dock-tabs {
    display: flex;
    height: 15px;
    font: bold 8px/15px "Liberation Mono", monospace;
}

.dock-tabs a {
    padding: 0 8px;
}

.dock-tabs .active {
    background: #fff;
    border: 1px solid #c4c4c4;
    border-top: none;
    border-bottom: 1px solid #005686;
    box-shadow: inset 0 -1px #005686;
    font-weight: normal;
}

.dock-tabs .first {
    border-left: 1px solid #aaa;
}

.dock-tabs .last {
    border-right: 1px solid #aaa;
}

.msg-tools {
    display: flex;
    gap: 4px;
    height: 16px;
}

.msg-tools button {
    width: 17px;
    height: 15px;
    padding: 1px 2px;
    background: #fafafa;
    border: 1px solid #d8d8d8;
}

.msg-tools .flat {
    margin-left: 8px;
    background: none;
    border-color: transparent;
}

.msg-tools svg {
    width: 11px;
    height: 11px;
}

.msg-box {
    flex: 1;
    background: #fff;
    border: 1px solid #b4b4b4;
}

/* Status bar */
.statusbar {
    display: flex;
    align-items: center;
    gap: 6px;
    height: 21px;
    padding: 2px 2px 0 0;
    font-family: "Noto Sans", sans-serif;
    font-size: 8px;
    color: #222;
}

.ready {
    margin-right: auto;
    padding-left: 5px;
}

.statusbar button {
    display: flex;
    align-items: center;
    height: 16px;
}

.statusbar svg {
    width: 14px;
    height: 14px;
}

.statusbar .pressed {
    padding: 0 2px;
    border: 1px solid #c4c4c4;
    background: #f8f8f8;
}

.statusbar .pressed svg {
    width: 11px;
    height: 11px;
}

.blue {
    color: #2a6e96;
}

.wide {
    margin-left: 6px;
}

.raster {
    margin: 0 2px;
}

.sep {
    width: 1px;
    height: 12px;
    background: #d0d0d0;
}

.cell {
    padding-right: 5px;
    border-right: 1px solid #d0d0d0;
}

.units {
    display: flex;
    gap: 5px;
}

.taskbar {
    display: flex;
    height: 6px;
    overflow: hidden;
    background: linear-gradient(90deg, #f6e0d6, #dcdaea 8%, #f6e2d6 16%, #fde9cc 36%, #fdeccc 50%, #f8f4b8 56%, #fdeacc 62%, #fde9cc 75%, #f5dcd2);
}

.task-search {
    width: 268px;
    margin-left: 711px;
    background: #fff;
    border: 1px solid #d0d0d0;
    border-bottom: none;
}

.task-app {
    width: 37px;
    margin-left: 231px;
    background: #fdf6e6;
}

.taskbar time {
    margin: 3px 52px 0 auto;
    line-height: 9px;
    color: #222;
}

/* Enlarged tree, laid over the window */
.magnifier {
    position: absolute;
    left: 26px;
    top: 546px;
    width: 439px;
    height: 212px;
    overflow: hidden;
    background: #fff;
    border-top: 2px solid #fff;
    font: 29px/40px "Noto Sans", sans-serif;
    color: #222;
}

.magnifier ul {
    border-top: 4px solid #b8b8b8;
}

.magnifier li {
    display: flex;
    align-items: center;
    height: 40px;
    padding-left: 62px;
    background: radial-gradient(circle, #888 1px, transparent 1px) 24px 0 / 4px 4px repeat-y;
}

.magnifier li.root {
    padding-left: 15px;
    background: none;
}

.magnifier .box {
    width: 23px;
    height: 23px;
    border: 2px solid #999;
    border-radius: 3px;
    background: #fafafa;
    color: #3b5bb0;
    font: bold 20px/18px "Liberation Sans", sans-serif;
    text-align: center;
}

.magnifier .dots {
    width: 12px;
    margin: 0 2px 0 3px;
    border-top: 2px dotted #888;
}

.magnifier svg {
    width: 34px;
    height: 38px;
}

.magnifier span {
    margin-left: 12px;
    padding: 0 5px;
}
```
